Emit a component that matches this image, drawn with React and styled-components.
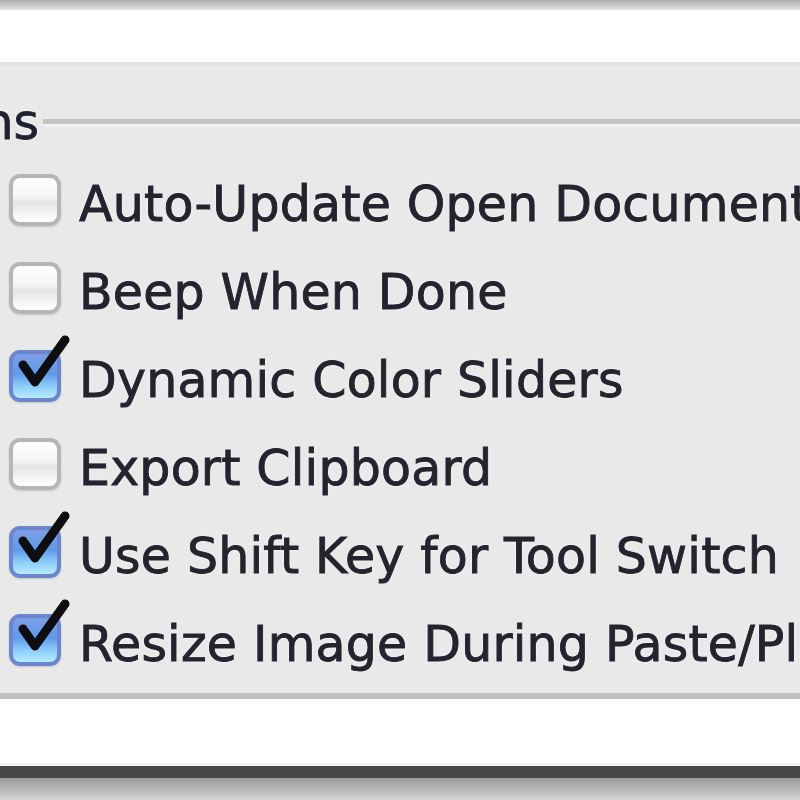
import React from "react";
import styled, { createGlobalStyle } from "styled-components";

const GlobalStyle = createGlobalStyle`
  html, body {
    margin: 0;
    padding: 0;
    background: #e9e9e9;
  }
  body {
    width: 800px;
    height: 800px;
    overflow: hidden;
  }
`;

const options = [
  { label: "Auto-Update Open Documents", checked: false },
  { label: "Beep When Done", checked: false },
  { label: "Dynamic Color Sliders", checked: true },
  { label: "Export Clipboard", checked: false },
  { label: "Use Shift Key for Tool Switch", checked: true },
  { label: "Resize Image During Paste/Place", checked: true },
];

const Window = styled.div`
  width: 800px;
  height: 800px;
  display: flex;
  flex-direction: column;
  overflow: hidden;
  font-family: "DejaVu Sans", "Liberation Sans", sans-serif;
  filter: blur(0.7px);
`;

const TopShade = styled.div`
  height: 10px;
  background: linear-gradient(#aeaeae, #e4e4e4);
`;

const WhiteBand = styled.div`
  height: ${(p) => p.$h}px;
  background: #fff;
  border-bottom: 3px solid ${(p) => p.$edge || "#e2e2e2"};
`;

const Panel = styled.div`
  background: #e9e9e9;
  padding-top: 36px;
  padding-bottom: 9px;
  border-bottom: 6px solid #bfbfbf;
`;

const GroupHeader = styled.div`
  height: 40px;
  display: flex;
  align-items: center;
  gap: 4px;
`;

const Legend = styled.span`
  font-size: 49px;
  line-height: 40px;
  padding-top: 4px;
  color: #1f2230;
  margin-left: -150px;
  white-space: nowrap;
  -webkit-text-stroke: 0.8px #1f2230;
  text-shadow: 0 0 3px #fff;
`;

const GroupLine = styled.div`
  flex: 1;
  height: 5px;
  background: #c3c3c3;
  box-shadow: 0 2px 2px #f6f6f6;
`;

const List = styled.div`
  margin-top: 15px;
  display: flex;
  flex-direction: column;
`;

const Row = styled.div`
  height: 88px;
  display: flex;
  align-items: center;
  gap: 18px;
  padding-left: 9px;
  white-space: nowrap;
`;

const Box = styled.div`
  position: relative;
  flex: none;
  width: 52px;
  height: 52px;
  box-sizing: border-box;
  border-radius: 11px;
  border: 4px solid ${(p) => (p.$checked ? "#6b86cf" : "#b6b6b6")};
  background: ${(p) =>
    p.$checked
      ? "linear-gradient(#7f9ee6 0%, #5f9ae8 45%, #8fd0fb 75%, #b7ecff 100%)"
      : "linear-gradient(#ffffff 0%, #f4f4f4 45%, #e4e4e4 55%, #ffffff 100%)"};
  box-shadow: 0 1px 2px rgba(0, 0, 0, 0.15);
`;

const Tick = styled.svg`
  position: absolute;
  left: 6px;
  top: -16px;
  width: 50px;
  height: 56px;
  overflow: visible;
`;

const Label = styled.span`
  font-size: 49px;
  line-height: 60px;
  padding-top: 9px;
  letter-spacing: 0.2px;
  color: #23242e;
  -webkit-text-stroke: 0.9px #23242e;
  text-shadow: 0 0 3px #fff, 0 0 1px #fff;
`;

const BottomShade = styled.div`
  flex: 1;
  border-top: 12px solid #474747;
  background: linear-gradient(#9a9a9a, #d4d4d4);
`;

function Checkbox({ checked }) {
  return (
    <Box $checked={checked}>
      {checked && (
        <Tick viewBox="0 0 50 56">
          <path
            d="M4 27 L16 44 L46 2"
            fill="none"
            stroke="#0d0d12"
            strokeWidth="9"
            strokeLinecap="round"
            strokeLinejoin="round"
          />
        </Tick>
      )}
    </Box>
  );
}

export default function App() {
  return (
    <>
      <GlobalStyle />
      <Window>
        <TopShade />
        <WhiteBand $h={52} />
        <Panel>
          <GroupHeader>
            <Legend>Options</Legend>
            <GroupLine />
          </GroupHeader>
          <List>
            {options.map((o) => (
              <Row key={o.label}>
                <Checkbox checked={o.checked} />
                <Label>{o.label}</Label>
              </Row>
            ))}
          </List>
        </Panel>
        <WhiteBand $h={64} $edge="#f2f2f2" />
        <BottomShade />
      </Window>
    </>
  );
}
